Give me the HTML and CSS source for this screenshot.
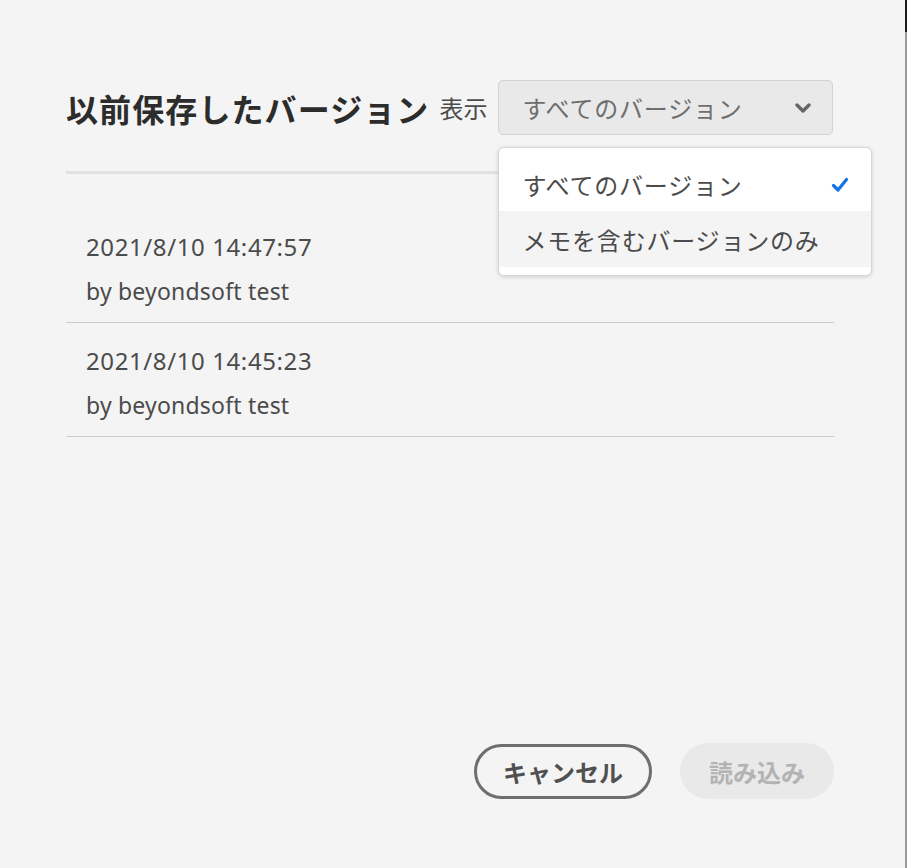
FILE: index.html
```html
<!DOCTYPE html>
<html lang="ja">
<head>
<meta charset="utf-8">
<link rel="stylesheet" href="styles.css">
</head>
<body>
<div class="dialog">
  <div class="header">
    <h1 class="title">以前保存したバージョン</h1>
    <span class="show-label">表示</span>
    <div class="picker-wrap">
      <button class="picker">
        <span class="picker-text">すべてのバージョン</span>
        <svg class="chevron" width="16" height="10" viewBox="0 0 16 10"><path d="M2 2 L8 8 L14 2" fill="none" stroke="#666" stroke-width="3.4" stroke-linecap="round" stroke-linejoin="round"/></svg>
      </button>
      <div class="menu">
        <div class="menu-item selected">
          <span>すべてのバージョン</span>
          <svg class="check" width="18" height="16" viewBox="0 0 18 16"><path d="M2.5 8.5 L7 13 L15.5 2.5" fill="none" stroke="#1473e6" stroke-width="3.2" stroke-linecap="round" stroke-linejoin="round"/></svg>
        </div>
        <div class="menu-item hover">
          <span>メモを含むバージョンのみ</span>
        </div>
      </div>
    </div>
  </div>
  <div class="rule"></div>
  <ul class="versions">
    <li class="version">
      <div class="v-date">2021/8/10 14:47:57</div>
      <div class="v-by">by beyondsoft test</div>
    </li>
    <li class="version">
      <div class="v-date">2021/8/10 14:45:23</div>
      <div class="v-by">by beyondsoft test</div>
    </li>
  </ul>
  <div class="footer">
    <button class="btn btn-cancel">キャンセル</button>
    <button class="btn btn-load" disabled>読み込み</button>
  </div>
</div>
<div class="edge"></div>
</body>
</html>
```
FILE: styles.css
```css
* { box-sizing: border-box; }
html, body { margin: 0; padding: 0; }
body {
  width: 907px;
  height: 868px;
  display: flex;
  background: #f4f4f4;
  font-family: "Noto Sans", "Noto Sans CJK JP", sans-serif;
  overflow: hidden;
}
.dialog {
  flex: 1;
  height: 868px;
  background: #f4f4f4;
  padding: 80px 71px 69px 66px;
  display: flex;
  flex-direction: column;
  border-bottom-right-radius: 4px;
}
.edge {
  width: 2px;
  height: 868px;
  background: linear-gradient(#1b1b1b 0, #1b1b1b 32px, #9a9a9a 32px);
}
.header {
  display: flex;
  align-items: center;
  height: 55px;
}
.title {
  margin: 0;
  font-family: "Noto Sans CJK JP", sans-serif;
  font-size: 32px;
  font-weight: 700;
  color: #2c2c2c;
  letter-spacing: 1.1px;
  white-space: nowrap;
}
.show-label {
  margin-left: 10px;
  font-family: "Noto Sans CJK JP", sans-serif;
  font-size: 24px;
  color: #4b4b4b;
}
.picker-wrap {
  position: relative;
  margin-left: 11px;
}
.picker {
  width: 335px;
  height: 55px;
  display: flex;
  align-items: center;
  justify-content: space-between;
  padding: 0 21px 0 23px;
  background: #e9e9e9;
  border: 1px solid #d3d3d3;
  border-radius: 5px;
  font-family: "Noto Sans CJK JP", sans-serif;
  font-size: 24px;
  letter-spacing: 0.8px;
  color: #6e6e6e;
}
.chevron { display: block; }
.menu {
  position: absolute;
  top: 67px;
  left: 0;
  width: 374px;
  background: #fff;
  border: 1px solid #d6d6d6;
  border-radius: 6px;
  box-shadow: 0 1px 4px rgba(0,0,0,0.15);
  padding-bottom: 8px;
  overflow: hidden;
}
.menu-item {
  display: flex;
  align-items: center;
  justify-content: space-between;
  padding: 0 22px 0 23px;
  font-family: "Noto Sans CJK JP", sans-serif;
  font-size: 24px;
  letter-spacing: 0.8px;
  color: #4b4b4b;
}
.menu-item.selected { height: 63px; padding-top: 10px; }
.menu-item.hover { height: 56px; background: #f4f4f4; }
.check { display: block; }
.rule {
  margin-top: 36px;
  height: 3px;
  background: #e1e1e1;
}
.versions {
  list-style: none;
  margin: 35px 0 0;
  padding: 0;
}
.version {
  padding: 16px 20px 9px;
  border-bottom: 1px solid #cacaca;
  color: #4b4b4b;
}
.v-date, .v-by {
  height: 44px;
  line-height: 44px;
  font-size: 23px;
  letter-spacing: 0.2px;
}
.v-date {
  font-size: 24px;
  letter-spacing: 0.6px;
}
.footer {
  margin-top: auto;
  display: flex;
  justify-content: flex-end;
  align-items: center;
  gap: 28px;
}
.btn {
  font-family: "Noto Sans CJK JP", sans-serif;
  font-size: 24px;
  font-weight: 700;
  border-radius: 28px;
  padding: 0;
}
.btn-cancel {
  width: 178px;
  height: 55px;
  border: 3px solid #6e6e6e;
  background: transparent;
  color: #505050;
}
.btn-load {
  width: 154px;
  height: 56px;
  border: none;
  background: #e9e9e9;
  color: #b3b3b3;
}
```
